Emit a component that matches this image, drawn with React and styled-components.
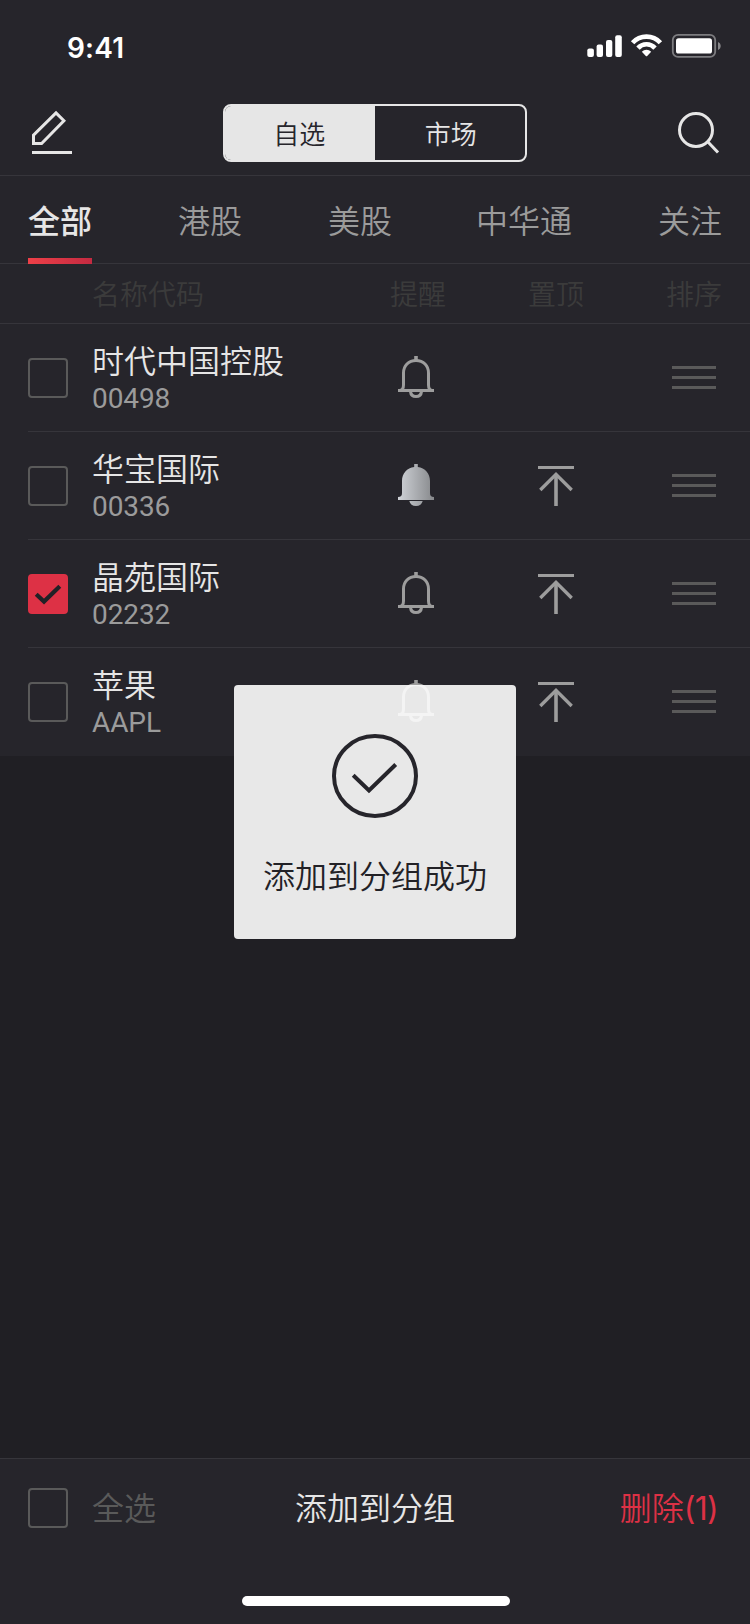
import React from 'react';
import styled, { createGlobalStyle } from 'styled-components';

const GlobalStyle = createGlobalStyle`
  * { box-sizing: border-box; }
  body {
    margin: 0;
    background: #201f24;
    font-family: "Noto Sans CJK SC", sans-serif;
    font-weight: 350;
    color: #e6e6e6;
  }
  button { background: none; border: 0; padding: 0; color: inherit; font: inherit; }
  svg { display: block; }
`;

const Screen = styled.div`
  position: relative;
  width: 750px;
  height: 1624px;
  display: flex;
  flex-direction: column;
  background: #201f24;
  overflow: hidden;
`;

const StatusBar = styled.div`
  height: 88px;
  flex: none;
  display: flex;
  justify-content: space-between;
  align-items: flex-start;
  padding: 34px 28px 0 67px;
  background: #26252b;
`;

const Clock = styled.span`
  font: 600 28px/28px Inter, sans-serif;
  letter-spacing: 0.2px;
  color: #fff;
`;

const NavBar = styled.header`
  height: 88px;
  flex: none;
  display: flex;
  justify-content: space-between;
  align-items: flex-start;
  padding: 16px 28px 0;
  background: #26252b;
  border-bottom: 1px solid #36353b;
`;

const IconButton = styled.button`
  width: 48px;
  height: 56px;
`;

const Segmented = styled.div`
  display: flex;
  width: 304px;
  height: 58px;
  border: 2px solid #e6e6e6;
  border-radius: 8px;
  overflow: hidden;
`;

const Segment = styled.button`
  flex: 1;
  font-size: 26px;
  line-height: 54px;
  padding: ${(p) => (p.$active ? '0 1px 1px 0' : '0 0 1px 2px')};
  background: ${(p) => (p.$active ? '#e6e6e6' : 'transparent')};
  color: ${(p) => (p.$active ? '#26252b' : '#e6e6e6')};
`;

const Tabs = styled.nav`
  height: 88px;
  flex: none;
  display: flex;
  gap: 86px;
  padding: 0 28px;
  background: #26252b;
  border-bottom: 1px solid #36353b;
`;

const Tab = styled.button`
  position: relative;
  flex: none;
  height: 88px;
  padding-bottom: 3px;
  font-size: 32px;
  line-height: 82px;
  font-weight: ${(p) => (p.$active ? 500 : 350)};
  color: ${(p) => (p.$active ? '#e6e6e6' : '#9b9b9b')};
  &:nth-child(4) {
    margin-left: -2px;
  }
  &::after {
    content: ${(p) => (p.$active ? '""' : 'none')};
    position: absolute;
    left: 0;
    right: 0;
    bottom: 0;
    height: 6px;
    background: linear-gradient(90deg, #ee4048, #c42a41);
  }
`;

const columns = `
  display: grid;
  grid-template-columns: 64px 254px 140px 140px 96px;
`;

const ColumnHeads = styled.div`
  ${columns}
  height: 60px;
  flex: none;
  padding: 0 28px;
  background: #26252b;
  border-bottom: 1px solid #36353b;
  font-size: 28px;
  line-height: 59px;
  color: #3b3b3b;
`;

const Head = styled.span`
  grid-column: ${(p) => p.$col};
  text-align: ${(p) => p.$align || 'center'};
  padding-left: ${(p) => p.$inset || 0}px;
`;

const List = styled.main`
  background: #26252b;
`;

const Row = styled.div`
  ${columns}
  height: 108px;
  margin-left: 28px;
  align-items: start;
  box-shadow: ${(p) => (p.$last ? 'none' : 'inset 0 -1px #36353b')};
`;

const CheckBox = styled.span`
  width: 40px;
  height: 40px;
  margin-top: ${(p) => p.$top || 34}px;
  border-radius: 4px;
  border: 2px solid ${(p) => (p.$checked ? '#dd3145' : '#5a5a5a')};
  background: ${(p) => (p.$checked ? '#dd3145' : 'transparent')};
`;

const Stock = styled.div`
  display: flex;
  flex-direction: column;
  padding-top: 13px;
`;

const Name = styled.span`
  font-size: 32px;
  line-height: 44px;
`;

const Code = styled.span`
  font: 400 28px/36px Roboto, sans-serif;
  letter-spacing: -0.1px;
  color: #9b9b9b;
`;

const Cell = styled.span`
  display: flex;
  justify-content: center;
  padding-top: ${(p) => p.$top}px;
`;

const DragCell = styled(Cell)`
  justify-content: flex-end;
  padding-right: 6px;
`;

const Spacer = styled.div`
  flex: 1;
`;

const BottomBar = styled.footer`
  height: 166px;
  flex: none;
  display: flex;
  flex-direction: column;
  align-items: center;
  background: #26252b;
  border-top: 1px solid #36353b;
`;

const Actions = styled.div`
  width: 100%;
  height: 137px;
  display: grid;
  grid-template-columns: 1fr auto 1fr;
  align-items: start;
  padding: 0 32px;
`;

const SelectAll = styled.label`
  display: flex;
  gap: 24px;
  margin-left: -4px;
  color: #5a5a5a;
`;

const ActionText = styled.span`
  font-size: 32px;
  line-height: 95px;
  text-align: ${(p) => p.$align || 'left'};
  color: ${(p) => p.$color || 'inherit'};
`;

const Count = styled.span`
  font-family: Inter, sans-serif;
  font-weight: 400;
  letter-spacing: -0.7px;
`;

const HomeIndicator = styled.div`
  width: 268px;
  height: 10px;
  margin-left: 2px;
  border-radius: 5px;
  background: #fff;
`;

const Toast = styled.div`
  position: absolute;
  left: 234px;
  top: 685px;
  width: 282px;
  height: 254px;
  display: flex;
  flex-direction: column;
  align-items: center;
  padding-top: 49px;
  gap: 34px;
  border-radius: 4px;
  background: #e8e8e8;
  color: #222126;
  overflow: hidden;
`;

const ToastText = styled.span`
  font-size: 32px;
  line-height: 44px;
`;

const GhostBell = styled.span`
  position: absolute;
  left: 164px;
  top: -5px;
`;

const StatusIcons = () => (
  <svg width="136" height="26" viewBox="586 34 136 26" fill="#fff">
    <rect x="587.3" y="48.4" width="6.6" height="8.6" rx="2" />
    <rect x="596.6" y="44.5" width="6.4" height="12.5" rx="2" />
    <rect x="606" y="40" width="6.3" height="17" rx="2" />
    <rect x="615.2" y="35.2" width="6.6" height="21.8" rx="2" />
    <g fill="none" stroke="#fff" strokeWidth="4.6">
      <path d="M632.6 42.8a18.8 18.8 0 0 1 27.8 0" />
      <path d="M638 48.1a11.4 11.4 0 0 1 17 0" />
    </g>
    <path d="M641.8 51.7a6.9 6.9 0 0 1 9.4 0l-4 4.3a1 1 0 0 1-1.4 0z" />
    <rect x="672.8" y="34.9" width="42.4" height="22" rx="5.2" fill="none" stroke="#fff" strokeOpacity=".4" strokeWidth="1.8" />
    <rect x="676" y="38.3" width="36" height="15.2" rx="2.6" />
    <path d="M718 42v8c1.7-.7 2.7-2.2 2.7-4s-1-3.3-2.7-4z" fillOpacity=".45" />
  </svg>
);

const EditIcon = () => (
  <svg width="48" height="56" viewBox="28 104 48 56" fill="none" stroke="#e6e6e6" strokeWidth="3">
    <path d="M33.5 143.5V135.2L56 112.9L63.9 120.8L41.6 143.5Z" />
    <path d="M32 152.5H72" />
  </svg>
);

const SearchIcon = () => (
  <svg width="48" height="56" viewBox="674 104 48 56" fill="none" stroke="#e6e6e6" strokeWidth="3">
    <circle cx="696" cy="130" r="16.5" />
    <path d="M708 142L718 152.5" />
  </svg>
);

const BellIcon = ({ filled, color = '#9d9d9d' }) => (
  <svg width="36" height="42" viewBox="0 0 36 42" fill="none" stroke={color} strokeWidth="3">
    {filled ? (
      <>
        <defs>
          <linearGradient id="bellFill" x1="0" y1="0" x2="1" y2="0">
            <stop offset="0" stopColor="#d0d3d8" />
            <stop offset="1" stopColor="#86888b" />
          </linearGradient>
        </defs>
        <path
          d="M16.2 0H19.8V3C27 3.8 32 9.5 32 17V29C32 31.5 33 33 36 33V36H0V33C3 33 4 31.5 4 29V17C4 9.5 9 3.8 16.2 3ZM11.3 37H24.7C24 40 21.5 42 18 42S12 40 11.3 37Z"
          fill="url(#bellFill)"
          stroke="none"
        />
      </>
    ) : (
      <>
        <path d="M18 0V4" strokeWidth="3.6" />
        <path d="M1.5 34.5C4.3 34.3 5.5 32 5.5 29V17C5.5 9.7 10.5 4.5 18 4.5S30.5 9.7 30.5 17V29C30.5 32 31.7 34.3 34.5 34.5" />
        <path d="M0 34.5H36" />
        <path d="M12.5 35.5C12.8 38.6 15 40.5 18 40.5S23.2 38.6 23.5 35.5" />
      </>
    )}
  </svg>
);

const PinTopIcon = () => (
  <svg width="36" height="40" viewBox="0 0 36 40" fill="none" stroke="#9d9d9d">
    <path d="M0 1.5H36" strokeWidth="3" />
    <path d="M2.3 24L18 8.3L33.7 24" strokeWidth="3.3" />
    <path d="M18 8V40" strokeWidth="3.6" />
  </svg>
);

const DragIcon = () => (
  <svg width="44" height="23" viewBox="0 0 44 23" stroke="#5a5a5a" strokeWidth="3">
    <path d="M0 1.5H44M0 11.5H44M0 21.5H44" />
  </svg>
);

const CheckMark = () => (
  <svg width="36" height="36" viewBox="0 0 36 36" fill="none" stroke="#222126" strokeWidth="4.2">
    <path d="M6.2 18.2L14 25.5L29.8 10.3" />
  </svg>
);

const SuccessIcon = () => (
  <svg width="86" height="84" viewBox="0 0 86 84" fill="none" stroke="#26252b" strokeWidth="4">
    <ellipse cx="43" cy="42" rx="41" ry="40" />
    <path d="M21.2 41.3L37 56.5L63.7 30.5" />
  </svg>
);

const stocks = [
  { name: '时代中国控股', code: '00498' },
  { name: '华宝国际', code: '00336', alert: true, pin: true },
  { name: '晶苑国际', code: '02232', checked: true, pin: true },
  { name: '苹果', code: 'AAPL', pin: true },
];

const tabs = ['全部', '港股', '美股', '中华通', '关注'];

export default function App() {
  return (
    <>
      <GlobalStyle />
      <Screen>
        <StatusBar>
          <Clock>9:41</Clock>
          <StatusIcons />
        </StatusBar>
        <NavBar>
          <IconButton aria-label="编辑"><EditIcon /></IconButton>
          <Segmented>
            <Segment $active>自选</Segment>
            <Segment>市场</Segment>
          </Segmented>
          <IconButton aria-label="搜索"><SearchIcon /></IconButton>
        </NavBar>
        <Tabs>
          {tabs.map((t, i) => <Tab key={t} $active={i === 0}>{t}</Tab>)}
        </Tabs>
        <ColumnHeads>
          <Head $col={2} $align="left">名称代码</Head>
          <Head $col={3} $inset={4}>提醒</Head>
          <Head $col={4}>置顶</Head>
          <Head $col={5} $align="right">排序</Head>
        </ColumnHeads>
        <List>
          {stocks.map((s, i) => (
            <Row key={s.code} $last={i === stocks.length - 1}>
              <CheckBox $checked={s.checked}>{s.checked && <CheckMark />}</CheckBox>
              <Stock>
                <Name>{s.name}</Name>
                <Code>{s.code}</Code>
              </Stock>
              <Cell $top={32}><BellIcon filled={s.alert} /></Cell>
              <Cell $top={34}>{s.pin && <PinTopIcon />}</Cell>
              <DragCell $top={42}><DragIcon /></DragCell>
            </Row>
          ))}
        </List>
        <Spacer />
        <BottomBar>
          <Actions>
            <SelectAll>
              <CheckBox $top={29} />
              <ActionText>全选</ActionText>
            </SelectAll>
            <ActionText $align="center">添加到分组</ActionText>
            <ActionText $align="right" $color="#dd3145">删除<Count>(1)</Count></ActionText>
          </Actions>
          <HomeIndicator />
        </BottomBar>
        <Toast>
          <GhostBell><BellIcon color="#f4f4f4" /></GhostBell>
          <SuccessIcon />
          <ToastText>添加到分组成功</ToastText>
        </Toast>
      </Screen>
    </>
  );
}
